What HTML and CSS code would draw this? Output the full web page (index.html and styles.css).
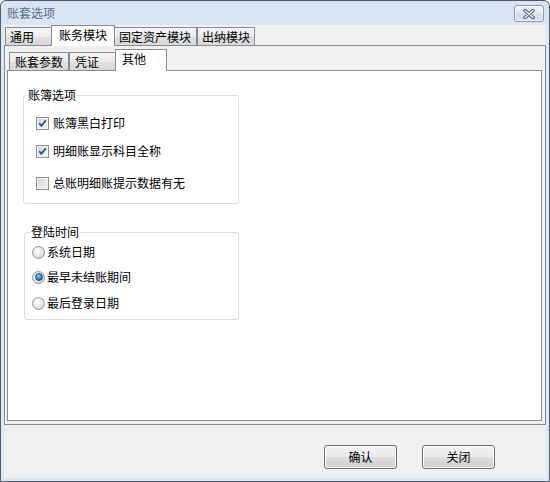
FILE: index.html
```html
<!DOCTYPE html>
<html lang="zh-CN">
<head>
<meta charset="utf-8">
<title>账套选项</title>
<link rel="stylesheet" href="styles.css">
</head>
<body>
<div class="window">
  <div class="titlebar">
    <span class="title">账套选项</span>
    <button class="close" aria-label="关闭">
      <svg width="12" height="10" viewBox="0 0 12 10">
        <path d="M2 1.5 L10 8.5 M10 1.5 L2 8.5" stroke="#46505c" stroke-width="3.4" stroke-linecap="round" fill="none"/>
        <path d="M2 1.5 L10 8.5 M10 1.5 L2 8.5" stroke="#f6f7f9" stroke-width="1.6" stroke-linecap="round" fill="none"/>
      </svg>
    </button>
  </div>
  <div class="client">
    <div class="tabs outer-tabs">
      <div class="tab t-tongyong">通用</div>
      <div class="tab active t-zhangwu">账务模块</div>
      <div class="tab t-guding">固定资产模块</div>
      <div class="tab t-chuna">出纳模块</div>
    </div>
    <div class="panel outer-panel">
      <div class="tabs inner-tabs">
        <div class="tab t-param">账套参数</div>
        <div class="tab t-voucher">凭证</div>
        <div class="tab active t-other">其他</div>
      </div>
      <div class="panel inner-panel">
        <div class="group g1">
          <div class="legend">账簿选项</div>
          <label class="row r1"><span class="cb"><svg width="11" height="11" viewBox="0 0 11 11"><path d="M2.2 5.2 L4.4 7.8 L8.8 2.4" stroke="#34508f" stroke-width="1.8" fill="none"/></svg></span>账簿黑白打印</label>
          <label class="row r2"><span class="cb"><svg width="11" height="11" viewBox="0 0 11 11"><path d="M2.2 5.2 L4.4 7.8 L8.8 2.4" stroke="#34508f" stroke-width="1.8" fill="none"/></svg></span>明细账显示科目全称</label>
          <label class="row r3"><span class="cb"></span>总账明细账提示数据有无</label>
        </div>
        <div class="group g2">
          <div class="legend">登陆时间</div>
          <label class="row q1"><span class="radio"></span>系统日期</label>
          <label class="row q2"><span class="radio on"></span>最早未结账期间</label>
          <label class="row q3"><span class="radio"></span>最后登录日期</label>
        </div>
      </div>
    </div>
    <div class="footer">
      <button class="btn">确认</button>
      <button class="btn">关闭</button>
    </div>
  </div>
</div>
</body>
</html>
```
FILE: styles.css
```css
* { box-sizing: border-box; }
html, body { margin: 0; padding: 0; }
body {
  width: 550px;
  height: 482px;
  overflow: hidden;
  background: #ffffff;
  font-family: "Noto Sans CJK SC", "Noto Sans", sans-serif;
  font-size: 12px;
  color: #000;
}
.window {
  width: 550px;
  height: 482px;
  border: 1px solid #515b67;
  border-radius: 6px 6px 0 0;
  background: linear-gradient(#d7e3f1, #dce7f4 30px, #dde8f4);
  padding: 0 3px 3px 3px;
  display: flex;
  flex-direction: column;
}
.titlebar {
  height: 24px;
  flex: none;
  display: flex;
  align-items: flex-start;
  justify-content: space-between;
  padding: 0 2px 0 3px;
}
.title {
  line-height: 24px;
  color: #5a6d84;
}
.close {
  margin-top: 4px;
  width: 30px;
  height: 17px;
  padding: 0;
  border: 1px solid #8d9bad;
  border-radius: 3px;
  background: linear-gradient(#eef3f9, #dfe7f1 50%, #d2dce9 51%, #d9e2ee);
  box-shadow: inset 0 0 0 1px rgba(255,255,255,0.55);
  display: flex;
  align-items: center;
  justify-content: center;
}
.close svg { display: block; }
.client {
  height: 453px;
  flex: none;
  background: #f0f0f0;
  display: flex;
  flex-direction: column;
}
.tabs {
  display: flex;
  align-items: flex-end;
  flex: none;
}
.outer-tabs { height: 20px; padding-left: 1px; }
.inner-tabs { height: 21px; padding-left: 2px; }
.tab {
  height: 18px;
  border: 1px solid #898c95;
  border-bottom: none;
  background: linear-gradient(#f4f4f4, #ececec 50%, #e1e1e1 51%, #d8d8d8);
  line-height: 17px;
  text-align: center;
  white-space: nowrap;
}
.tab.active {
  height: 21px;
  margin: 0 -2px -1px -2px;
  background: #ffffff;
  z-index: 1;
  line-height: 17px;
}
.inner-tabs .tab.active { height: 22px; line-height: 18px; }
.t-tongyong { width: 48px; text-align: left; padding-left: 4px; }
.t-zhangwu { width: 64px; }
.t-guding { width: 84px; }
.t-chuna { width: 58px; }
.t-param { width: 60px; }
.t-voucher { width: 48px; text-align: left; padding-left: 5px; }
.t-other { width: 52px; text-align: left; padding-left: 6px; }

.panel { border: 1px solid #898c95; }
.outer-panel {
  height: 380px;
  flex: none;
  padding: 3px 3px 3px 2px;
  background: #f0f0f0;
  display: flex;
  flex-direction: column;
}
.inner-panel {
  flex: 1;
  background: #ffffff;
  padding: 0;
}
.group {
  border: 1px solid #d5dfe5;
  border-radius: 3px;
}
.g1 { margin: 24px 0 0 15px; width: 216px; padding-bottom: 12px; }
.g2 { margin: 28px 0 0 16px; width: 215px; padding-bottom: 8px; }
.legend {
  width: fit-content;
  line-height: 16px;
  margin-top: -9px;
  padding: 0 1px;
  background: #ffffff;
}
.g1 .legend { margin-left: 3px; }
.g2 .legend { margin-left: 5px; }
.row {
  display: flex;
  align-items: center;
  height: 16px;
  line-height: 16px;
}
.g1 .row { margin-left: 12px; }
.g2 .row { margin-left: 7px; }
.r1 { margin-top: 12px; }
.r2 { margin-top: 12px; }
.r3 { margin-top: 16px; }
.q1 { margin-top: 4px; }
.q2 { margin-top: 9px; }
.q3 { margin-top: 10px; }
.cb {
  width: 13px;
  height: 13px;
  flex: none;
  margin-right: 4px;
  border: 1px solid #8e8f8f;
  background: linear-gradient(135deg, #cbcfd5, #e6e8eb 55%, #f6f6f6);
  box-shadow: inset 0 0 0 1px #f4f4f4;
  display: flex;
  align-items: center;
  justify-content: center;
}
.cb svg { display: block; }
.radio {
  width: 13px;
  height: 13px;
  flex: none;
  margin-right: 2px;
  border-radius: 50%;
  border: 1px solid #8f9399;
  background: radial-gradient(circle at 40% 35%, #ffffff, #e4e4e4 55%, #c9cbce);
  display: flex;
  align-items: center;
  justify-content: center;
}
.radio.on::after {
  content: "";
  width: 6px;
  height: 6px;
  border-radius: 50%;
  background: radial-gradient(circle at 40% 35%, #9fd2f5, #2f76c3 60%, #17457f);
  border: 1px solid #1f4a7d;
}
.footer {
  flex: 1;
  display: flex;
  justify-content: flex-end;
  align-items: flex-start;
  gap: 25px;
  padding: 20px 51px 0 0;
}
.btn {
  width: 73px;
  height: 24px;
  padding: 0;
  border: 1px solid #707070;
  border-radius: 3px;
  background: linear-gradient(#f2f2f2, #ebebeb 50%, #dddddd 51%, #cfcfcf);
  box-shadow: inset 0 0 0 1px #fbfbfb;
  font-family: "Noto Sans CJK SC", "Noto Sans", sans-serif;
  font-size: 12px;
  color: #000;
  line-height: 22px;
}
```
